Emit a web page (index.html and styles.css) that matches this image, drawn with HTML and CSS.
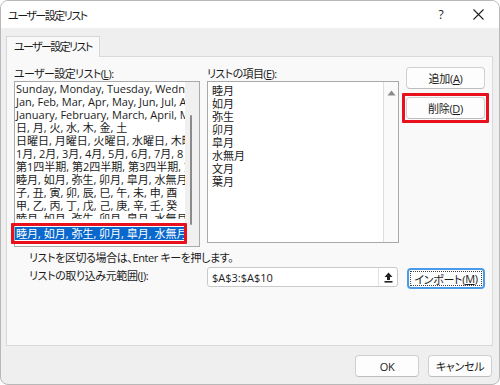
FILE: index.html
```html
<!DOCTYPE html>
<html lang="ja">
<head>
<meta charset="utf-8">
<title>ユーザー設定リスト</title>
<link rel="stylesheet" href="styles.css">
</head>
<body>
<div class="window">
  <div class="titlebar">
    <span class="title">ユーザー設定リスト</span>
    <span class="help">?</span>
    <span class="close">
      <svg width="11" height="11" viewBox="0 0 11 11"><path d="M0.5 0.5 L10.5 10.5 M10.5 0.5 L0.5 10.5" stroke="#222" stroke-width="1.1" fill="none"/></svg>
    </span>
  </div>
  <div class="content">
    <div class="tabs"><div class="tab">ユーザー設定リスト</div></div>
    <div class="panel">
      <div class="cols">
        <div class="col">
          <div class="label">ユーザー設定リスト(<u>L</u>):</div>
          <div class="listbox left-list">
            <div class="list-content">
              <div class="rows">
                <div class="row">Sunday, Monday, Tuesday, Wedne</div>
                <div class="row">Jan, Feb, Mar, Apr, May, Jun, Jul, A</div>
                <div class="row">January, February, March, April, M</div>
                <div class="row">日, 月, 火, 水, 木, 金, 土</div>
                <div class="row">日曜日, 月曜日, 火曜日, 水曜日, 木曜</div>
                <div class="row">1月, 2月, 3月, 4月, 5月, 6月, 7月, 8</div>
                <div class="row">第1四半期, 第2四半期, 第3四半期, 第</div>
                <div class="row">睦月, 如月, 弥生, 卯月, 皐月, 水無月</div>
                <div class="row">子, 丑, 寅, 卯, 辰, 巳, 午, 未, 申, 酉</div>
                <div class="row">甲, 乙, 丙, 丁, 戊, 己, 庚, 辛, 壬, 癸</div>
                <div class="row">睦月, 如月, 弥生, 卯月, 皐月, 水無月</div>
              </div>
              <div class="row selected"><span class="sel-text">睦月, 如月, 弥生, 卯月, 皐月, 水無月</span></div>
            </div>
            <div class="scrollbar left-scroll"><div class="thumb"></div></div>
          </div>
        </div>
        <div class="col">
          <div class="label">リストの項目(<u>E</u>):</div>
          <div class="listbox right-list">
            <div class="list-content items">
              <div class="row">睦月</div>
              <div class="row">如月</div>
              <div class="row">弥生</div>
              <div class="row">卯月</div>
              <div class="row">皐月</div>
              <div class="row">水無月</div>
              <div class="row">文月</div>
              <div class="row">葉月</div>
            </div>
            <div class="scrollbar right-scroll">
              <svg width="9" height="6" viewBox="0 0 9 6"><path d="M4.5 0.5 L8.5 5.5 L0.5 5.5 Z" fill="#8a8a8a"/></svg>
            </div>
          </div>
        </div>
        <div class="col buttons">
          <button class="btn side">追加(<u>A</u>)</button>
          <button class="btn side marked">削除(<u>D</u>)</button>
        </div>
      </div>
      <div class="hint">リストを区切る場合は、Enter キーを押します。</div>
      <div class="cols import-row">
        <div class="import-label">リストの取り込み元範囲(<u>I</u>):</div>
        <div class="input">
          <span class="input-text">$A$3:$A$10</span>
          <span class="collapse">
            <svg width="9" height="11" viewBox="0 0 9 11"><path d="M4.5 0.5 L8.5 5 L6 5 L6 8 L3 8 L3 5 L0.5 5 Z" fill="#222"/><rect x="0.5" y="9" width="8" height="1.6" fill="#222"/></svg>
          </span>
        </div>
        <button class="btn import focused"><span class="focus-ring">インポート(<u>M</u>)</span></button>
      </div>
    </div>
    <div class="footer">
      <button class="btn foot">OK</button>
      <button class="btn foot">キャンセル</button>
    </div>
  </div>
</div>
</body>
</html>
```

FILE: styles.css
```css
* { box-sizing: border-box; }
html, body { margin: 0; padding: 0; }
body {
  width: 500px;
  height: 385px;
  background: #ffffff;
  font-family: "Open Sans", "Noto Sans CJK JP", sans-serif;
  font-size: 11px;
  color: #1b1b1b;
  font-feature-settings: "palt";
  letter-spacing: -0.4px;
}
u { text-decoration: underline; text-underline-offset: 1px; }

.window {
  width: 500px;
  height: 385px;
  border: 1px solid #b8b8b8;
  border-radius: 8px;
  overflow: hidden;
  background: #efefef;
  display: flex;
  flex-direction: column;
}
.titlebar {
  height: 27px;
  background: #ffffff;
  display: flex;
  align-items: center;
  padding-left: 7px;
  flex-shrink: 0;
}
.title { flex: 1; font-size: 11px; letter-spacing: -1.5px; }
.help { width: 12px; text-align: center; font-size: 12px; margin-right: 26px; letter-spacing: 0; }
.close { width: 11px; height: 11px; display: flex; margin-right: 15px; }

.content {
  flex: 1;
  padding: 8px 6px 0 5px;
  display: flex;
  flex-direction: column;
}
.tabs { display: flex; height: 20px; position: relative; z-index: 1; }
.tab {
  height: 21px;
  border: 1px solid #d6d6d6;
  border-bottom: none;
  background: #f9f9f9;
  padding: 0 7px 0 7px;
  line-height: 20px;
  white-space: nowrap;
  letter-spacing: -1.6px;
}
.panel {
  height: 290px;
  border: 1px solid #d9d9d9;
  background: #f9f9f9;
  padding: 10px 0 0 7px;
}
.cols {
  display: grid;
  grid-template-columns: 186px 192px 79px;
  column-gap: 7px;
}
.label { height: 14px; line-height: 13px; white-space: nowrap; letter-spacing: -0.6px; }

.listbox {
  border: 1px solid #a9a9a9;
  background: #ffffff;
  display: flex;
}
.left-list { height: 166px; }
.right-list { height: 162px; }
.list-content {
  flex: 1;
  min-width: 0;
  white-space: nowrap;
  letter-spacing: 0;
}
.row { height: 13px; line-height: 13px; }
.rows { height: 137px; overflow: hidden; padding-left: 1px; }
.row.selected {
  position: relative;
  z-index: 2;
  margin-top: 8px;
  margin-right: 1px;
  background: #0a68cc;
  color: #ffffff;
}
.sel-text { display: block; overflow: hidden; padding-left: 1px; }
.row.selected::after,
.btn.marked::after {
  content: "";
  position: absolute;
  border: 3px solid #e8101c;
  border-radius: 1px;
  pointer-events: none;
}
.row.selected::after { left: -4px; top: -4px; right: -3px; bottom: -4px; }
.items { padding: 2px 0 0 4px; overflow: hidden; }

.scrollbar { width: 14px; flex-shrink: 0; }
.left-scroll { background: #f0f0f0; position: relative; }
.left-scroll .thumb {
  position: absolute;
  left: 5px;
  top: 33px;
  width: 2px;
  height: 110px;
  background: #8b8b8b;
  border-radius: 1px;
}
.right-scroll {
  width: 15px;
  border-left: 1px solid #dedede;
  background: #fafafa;
  display: flex;
  justify-content: center;
  padding-top: 8px;
}
.right-scroll svg { display: block; }

.btn {
  font: inherit;
  color: #1b1b1b;
  background: #fdfdfd;
  border: 1px solid #d0d0d0;
  border-bottom-color: #bdbdbd;
  border-radius: 4px;
  padding: 0;
  display: flex;
  align-items: center;
  justify-content: center;
  letter-spacing: -0.3px;
}
.buttons { display: flex; flex-direction: column; gap: 8px; }
.btn.side { width: 79px; height: 22px; }
.btn.marked { position: relative; }
.btn.marked::after { left: -5px; top: -5px; right: -5px; bottom: -5px; }

.hint { margin-top: 4px; padding-left: 15px; height: 13px; line-height: 13px; white-space: nowrap; }
.import-row { margin-top: 3px; align-items: start; }
.import-label { padding-left: 15px; line-height: 13px; margin-top: 2px; white-space: nowrap; }
.input {
  width: 191px;
  height: 20px;
  border: 1px solid #c9c9c9;
  border-radius: 3px;
  background: #ffffff;
  display: flex;
  align-items: center;
  padding-left: 4px;
  letter-spacing: 0;
}
.input-text { flex: 1; }
.collapse {
  width: 19px;
  height: 18px;
  border-left: 1px solid #e2e2e2;
  display: flex;
  align-items: center;
  justify-content: center;
}
.btn.import {
  width: 78px;
  height: 21px;
  margin-top: 1px;
  margin-left: 1px;
  border: 2px solid #4a9ae8;
  border-radius: 4px;
  padding: 1px;
}
.focus-ring {
  flex: 1;
  align-self: stretch;
  border: 1px dotted #444;
  display: flex;
  align-items: center;
  justify-content: center;
}

.footer {
  display: flex;
  justify-content: flex-end;
  gap: 9px;
  padding: 9px 1px 0 0;
}
.btn.foot { width: 64px; height: 22px; }
```
